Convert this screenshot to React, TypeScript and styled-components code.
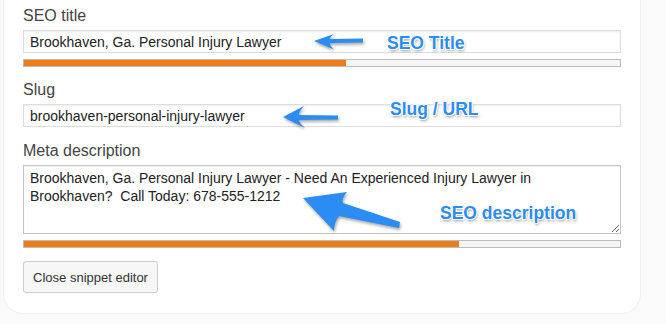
import { FC } from "react";
import styled, { createGlobalStyle } from "styled-components";

const GlobalStyle = createGlobalStyle`
  html, body {
    margin: 0;
    padding: 0;
    background: #fafafa;
  }
  body {
    font-family: "Liberation Sans", Arial, sans-serif;
  }
`;

const Page = styled("div")`
  position: relative;
  width: 666px;
  height: 324px;
  overflow: hidden;
  background: #fafafa;
`;

const Card = styled("div")`
  box-sizing: border-box;
  margin-left: 3px;
  width: 638px;
  background: #fff;
  border: 1px solid #f0f0f0;
  border-top: none;
  border-radius: 0 0 20px 20px;
  padding: 6px 19px 20px 19px;
  display: flex;
  flex-direction: column;
  align-items: flex-start;
`;

const Label = styled("label")<{ $gap?: number }>`
  display: block;
  margin-top: ${(p) => p.$gap ?? 0}px;
  margin-bottom: 4px;
  font-size: 16px;
  line-height: 20px;
  color: #444;
`;

const TextInput = styled("input")`
  box-sizing: border-box;
  display: block;
  width: 598px;
  height: 23px;
  margin: 0;
  padding: 0 6px;
  border: 1px solid #ddd;
  box-shadow: inset 0 1px 2px rgba(0, 0, 0, 0.07);
  background: #fff;
  font-family: "Liberation Sans", Arial, sans-serif;
  font-size: 14px;
  color: #222;
  outline: none;
`;

const TextArea = styled("textarea")`
  box-sizing: border-box;
  display: block;
  width: 598px;
  height: 69px;
  margin: 0;
  padding: 3px 6px;
  border: 1px solid #c4c4c4;
  box-shadow: inset 0 1px 2px rgba(0, 0, 0, 0.07);
  background: #fff;
  font-family: "Liberation Sans", Arial, sans-serif;
  font-size: 14px;
  line-height: 18px;
  color: #222;
  outline: none;
  overflow: hidden;
`;

const Progress = styled("div")`
  box-sizing: border-box;
  width: 598px;
  height: 8px;
  margin-top: 6px;
  border: 1px solid #bcbcbc;
  background: #f5f5f5;
`;

const ProgressFill = styled("div")`
  height: 100%;
  background: #ee7c1b;
`;

const Button = styled("button")`
  box-sizing: border-box;
  margin-top: 13px;
  height: 32px;
  width: 135px;
  padding: 0;
  border: 1px solid #ccc;
  border-radius: 3px;
  background: #f7f7f7;
  font-family: "Liberation Sans", Arial, sans-serif;
  font-size: 13px;
  color: #333;
`;

const Note = styled("span")<{ $x: number; $y: number }>`
  position: absolute;
  left: ${(p) => p.$x}px;
  top: ${(p) => p.$y}px;
  font-family: "Liberation Sans", Arial, sans-serif;
  font-weight: bold;
  font-size: 17.5px;
  line-height: 1;
  color: #2b8cf3;
  white-space: nowrap;
  text-shadow: -1px -1px 0 #fff, 1px -1px 0 #fff, -1px 1px 0 #fff,
    1px 1px 0 #fff, 1px 2px 3px rgba(0, 0, 0, 0.45);
`;

const Arrows = styled("svg")`
  position: absolute;
  left: 0;
  top: 0;
  pointer-events: none;
  filter: drop-shadow(1px 2px 1.5px rgba(0, 0, 0, 0.35));
`;

const ARROWS = [
  "M314 41 L334 34 Q329 38 330 39 L363 38.5 L363 42.5 L330 43 Q329 45 334 49.5 Z",
  "M283 117 L304 106 Q298 113 299 115 L338 115.5 L338 119.5 L299 120 Q298 122 305 128 Z",
  "M303 198 L347 192 Q341 199 343 203 L400 222 L399 228 L339 216 Q334 222 334 231 Z",
];

const App: FC = () => {
  return (
    <Page>
      <GlobalStyle />
      <Card>
        <Label>SEO title</Label>
        <TextInput readOnly value="Brookhaven, Ga. Personal Injury Lawyer" />
        <Progress>
          <ProgressFill style={{ width: "54%" }} />
        </Progress>

        <Label $gap={13}>Slug</Label>
        <TextInput readOnly value="brookhaven-personal-injury-lawyer" />

        <Label $gap={14}>Meta description</Label>
        <TextArea
          readOnly
          value={
            "Brookhaven, Ga. Personal Injury Lawyer - Need An Experienced Injury Lawyer in\nBrookhaven?  Call Today: 678-555-1212"
          }
        />
        <Progress>
          <ProgressFill style={{ width: "73%" }} />
        </Progress>

        <Button>Close snippet editor</Button>
      </Card>

      <Arrows width="666" height="324" viewBox="0 0 666 324">
        {ARROWS.map((d) => (
          <path key={d} d={d} fill="#2b8cf3" />
        ))}
      </Arrows>
      <Note $x={387} $y={35}>SEO Title</Note>
      <Note $x={390} $y={101}>Slug / URL</Note>
      <Note $x={440} $y={205}>SEO description</Note>
    </Page>
  );
};

export default App;
